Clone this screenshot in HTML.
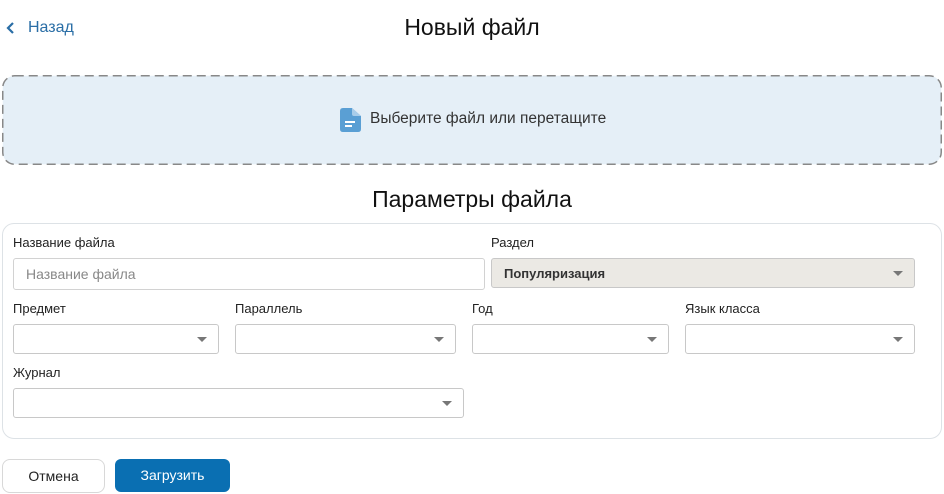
<!DOCTYPE html>
<html><head><meta charset="utf-8"><style>
*{box-sizing:border-box;margin:0;padding:0}
body{width:944px;height:494px;background:#fff;font-family:"Liberation Sans",Arial,sans-serif;position:relative;overflow:hidden;color:#222}
.a{position:absolute}
.lbl{position:absolute;font-size:13px;color:#222}
.sel{position:absolute;border:1px solid #c8c8c8;border-radius:3px;background:#fff}
.sel::after{content:"";position:absolute;right:11px;top:50%;margin-top:-2px;border-left:5px solid transparent;border-right:5px solid transparent;border-top:5px solid #777}
</style></head><body>
<svg class="a" style="left:5px;top:21px" width="10" height="14" viewBox="0 0 10 14"><path d="M8 2 L3 7 L8 12" fill="none" stroke="#2a6ea6" stroke-width="2.2"/></svg>
<div class="a" style="left:28px;top:19px;font-size:16px;color:#2a6ea6">Назад</div>
<div class="a" style="left:0;width:944px;top:14px;text-align:center;font-size:23px;color:#111">Новый файл</div>
<svg class="a" style="left:2px;top:75px" width="940" height="90"><rect x="0.75" y="0.75" width="938.5" height="88.5" rx="12" fill="#e5eff7" stroke="#888" stroke-width="1.5" stroke-dasharray="9 5"/></svg>
<svg class="a" style="left:340px;top:108px" width="21" height="24" viewBox="0 0 21 24"><path d="M3 0 H12 L21 8 V21 Q21 24 18 24 H3 Q0 24 0 21 V3 Q0 0 3 0Z" fill="#5a9fd4"/><path d="M12 0 V6 Q12 8 14 8 H21" fill="#a9cdea"/><rect x="5" y="13" width="10" height="2" fill="#fff"/><rect x="5" y="17" width="7" height="2" fill="#fff"/></svg>
<div class="a" style="left:370px;top:110px;font-size:15.5px;color:#333">Выберите файл или перетащите</div>
<div class="a" style="left:0;width:944px;top:186px;text-align:center;font-size:23px;color:#111">Параметры файла</div>
<div class="a" style="left:2px;top:223px;width:940px;height:216px;border:1px solid #dde2e6;border-radius:12px"></div>
<div class="lbl" style="left:13px;top:235px">Название файла</div>
<div class="a" style="left:13px;top:258px;width:472px;height:32px;border:1px solid #d2d2d2;border-radius:3px;font-size:14px;color:#888;padding:7px 12px">Название файла</div>
<div class="lbl" style="left:491px;top:235px">Раздел</div>
<div class="sel" style="left:491px;top:258px;width:424px;height:30px;background:#ebe9e4;font-size:13px;font-weight:bold;color:#333;padding:7px 12px">Популяризация</div>
<div class="lbl" style="left:13px;top:301px">Предмет</div>
<div class="sel" style="left:13px;top:324px;width:206px;height:30px"></div>
<div class="lbl" style="left:235px;top:301px">Параллель</div>
<div class="sel" style="left:235px;top:324px;width:221px;height:30px"></div>
<div class="lbl" style="left:472px;top:301px">Год</div>
<div class="sel" style="left:472px;top:324px;width:197px;height:30px"></div>
<div class="lbl" style="left:685px;top:301px">Язык класса</div>
<div class="sel" style="left:685px;top:324px;width:230px;height:30px"></div>
<div class="lbl" style="left:13px;top:365px">Журнал</div>
<div class="sel" style="left:13px;top:388px;width:451px;height:30px"></div>
<div class="a" style="left:2px;top:459px;width:103px;height:34px;border:1px solid #d8d8d8;border-radius:8px;text-align:center;line-height:32px;font-size:14px">Отмена</div>
<div class="a" style="left:115px;top:459px;width:115px;height:33px;background:#0a6fb2;border-radius:6px;text-align:center;line-height:33px;font-size:14px;color:#fff">Загрузить</div>
</body></html>
